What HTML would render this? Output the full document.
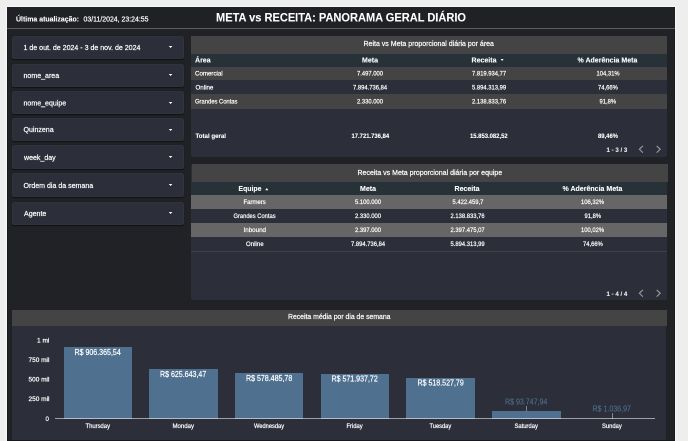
<!DOCTYPE html>
<html lang="pt-BR">
<head>
<meta charset="utf-8">
<title>META vs RECEITA: PANORAMA GERAL DIÁRIO</title>
<style>
*{margin:0;padding:0;box-sizing:border-box}
html,body{width:688px;height:441px;overflow:hidden;background:#eeeeee}
body{position:relative;font-family:"Liberation Sans","DejaVu Sans",sans-serif;color:#fff}
.a{position:absolute}
.t{position:absolute;white-space:nowrap;line-height:1;transform-origin:0 0;will-change:transform}
.t span{display:inline-block;transform-origin:0 0}
</style>
</head>
<body>
<div class="a" style="left:7px;top:6.5px;width:668px;height:434px;background:#212226;box-shadow:0 0 0 1.3px #f6f6f6, inset 0 0 0 1px rgba(0,0,0,.28);"></div>
<div class="a" style="left:7px;top:6.5px;width:668px;height:21.5px;background:#202124;"></div>
<div class="a" style="left:7px;top:28px;width:668px;height:1px;background:#5c5c5c;"></div>
<div class="a" style="left:12px;top:35.6px;width:172px;height:23.4px;background:#2c2f39;border-radius:2px;box-shadow:inset 0 0 0 .8px rgba(255,255,255,.035), 0 0.3px 1px rgba(0,0,0,.5);"></div>
<svg class="a" style="left:166px;top:44.4px" width="10" height="6" viewBox="0 0 10 6"><path d="M2.8 1.9 L6.4 1.9 L4.6 3.9 Z" fill="#fff"/></svg>
<div class="a" style="left:12px;top:63.5px;width:172px;height:23.2px;background:#2c2f39;border-radius:2px;box-shadow:inset 0 0 0 .8px rgba(255,255,255,.035), 0 0.3px 1px rgba(0,0,0,.5);"></div>
<svg class="a" style="left:166px;top:72.3px" width="10" height="6" viewBox="0 0 10 6"><path d="M2.8 1.9 L6.4 1.9 L4.6 3.9 Z" fill="#fff"/></svg>
<div class="a" style="left:12px;top:91.3px;width:172px;height:23px;background:#2c2f39;border-radius:2px;box-shadow:inset 0 0 0 .8px rgba(255,255,255,.035), 0 0.3px 1px rgba(0,0,0,.5);"></div>
<svg class="a" style="left:166px;top:99.9px" width="10" height="6" viewBox="0 0 10 6"><path d="M2.8 1.9 L6.4 1.9 L4.6 3.9 Z" fill="#fff"/></svg>
<div class="a" style="left:12px;top:117.9px;width:172px;height:23.1px;background:#2c2f39;border-radius:2px;box-shadow:inset 0 0 0 .8px rgba(255,255,255,.035), 0 0.3px 1px rgba(0,0,0,.5);"></div>
<svg class="a" style="left:166px;top:126.6px" width="10" height="6" viewBox="0 0 10 6"><path d="M2.8 1.9 L6.4 1.9 L4.6 3.9 Z" fill="#fff"/></svg>
<div class="a" style="left:12px;top:145.4px;width:172px;height:23.2px;background:#2c2f39;border-radius:2px;box-shadow:inset 0 0 0 .8px rgba(255,255,255,.035), 0 0.3px 1px rgba(0,0,0,.5);"></div>
<svg class="a" style="left:166px;top:154.3px" width="10" height="6" viewBox="0 0 10 6"><path d="M2.8 1.9 L6.4 1.9 L4.6 3.9 Z" fill="#fff"/></svg>
<div class="a" style="left:12px;top:173px;width:172px;height:23.9px;background:#2c2f39;border-radius:2px;box-shadow:inset 0 0 0 .8px rgba(255,255,255,.035), 0 0.3px 1px rgba(0,0,0,.5);"></div>
<svg class="a" style="left:166px;top:182px" width="10" height="6" viewBox="0 0 10 6"><path d="M2.8 1.9 L6.4 1.9 L4.6 3.9 Z" fill="#fff"/></svg>
<div class="a" style="left:12px;top:201.5px;width:172px;height:23.3px;background:#2c2f39;border-radius:2px;box-shadow:inset 0 0 0 .8px rgba(255,255,255,.035), 0 0.3px 1px rgba(0,0,0,.5);"></div>
<svg class="a" style="left:166px;top:210.3px" width="10" height="6" viewBox="0 0 10 6"><path d="M2.8 1.9 L6.4 1.9 L4.6 3.9 Z" fill="#fff"/></svg>
<div class="a" style="left:191px;top:35.6px;width:476px;height:121.3px;background:#2c2f39;border-radius:0 0 2px 2px;"></div>
<div class="a" style="left:191px;top:35.6px;width:476px;height:18px;background:#444444;"></div>
<div class="a" style="left:191px;top:53.6px;width:476px;height:12.9px;background:#263238;"></div>
<div class="a" style="left:191px;top:66.5px;width:476px;height:13.8px;background:#444444;"></div>
<div class="a" style="left:191px;top:94.2px;width:476px;height:14.4px;background:#444444;"></div>
<svg class="a" style="left:498px;top:56px" width="8" height="8" viewBox="0 0 8 8"><path d="M2.6 2.9 L5.6 2.9 L4.1 4.9 Z" fill="#fff"/></svg>
<svg class="a" style="left:636px;top:144.4px" width="28" height="10" viewBox="0 0 28 10"><path d="M6.9 1.9 L3.4 5.3 L6.9 8.7" fill="none" stroke="#9c9c9c" stroke-width="1.15"/><path d="M20.7 1.9 L24.2 5.3 L20.7 8.7" fill="none" stroke="#9c9c9c" stroke-width="1.15"/></svg>
<div class="a" style="left:191px;top:164.6px;width:475.5px;height:135.6px;background:#2c2f39;border-radius:0 0 2px 2px;"></div>
<div class="a" style="left:192.25px;top:164.4px;width:476px;height:17.3px;background:#444444;"></div>
<div class="a" style="left:191px;top:181.6px;width:475.5px;height:13.5px;background:#263238;"></div>
<div class="a" style="left:191px;top:195.1px;width:475.5px;height:13.8px;background:#666666;"></div>
<div class="a" style="left:191px;top:223px;width:475.5px;height:14px;background:#666666;"></div>
<div class="a" style="left:191px;top:251px;width:475.5px;height:0.6px;background:#3d4048;"></div>
<svg class="a" style="left:262.7px;top:184.5px" width="8" height="8" viewBox="0 0 8 8"><path d="M2.2 5.2 L5.4 5.2 L3.8 3 Z" fill="#fff"/></svg>
<svg class="a" style="left:636px;top:288.4px" width="28" height="10" viewBox="0 0 28 10"><path d="M6.9 1.9 L3.4 5.3 L6.9 8.7" fill="none" stroke="#9c9c9c" stroke-width="1.15"/><path d="M20.7 1.9 L24.2 5.3 L20.7 8.7" fill="none" stroke="#9c9c9c" stroke-width="1.15"/></svg>
<div class="a" style="left:12.4px;top:310px;width:654.1px;height:130px;background:#2c2f39;"></div>
<div class="a" style="left:12px;top:309.7px;width:655px;height:16.7px;background:#444444;"></div>
<div class="a" style="left:63.5px;top:347.45px;width:68.6px;height:71.1497px;background:#50708f;"></div>
<div class="a" style="left:149.2px;top:369.487px;width:68.6px;height:49.113px;background:#50708f;"></div>
<div class="a" style="left:234.9px;top:373.189px;width:68.6px;height:45.4111px;background:#50708f;"></div>
<div class="a" style="left:320.6px;top:373.703px;width:68.6px;height:44.8971px;background:#50708f;"></div>
<div class="a" style="left:406.3px;top:377.896px;width:68.6px;height:40.7044px;background:#50708f;"></div>
<div class="a" style="left:492px;top:411.241px;width:68.6px;height:7.35921px;background:#50708f;"></div>
<div class="a" style="left:525.95px;top:406.2px;width:0.7px;height:5.04079px;background:#80868f;"></div>
<div class="a" style="left:611.65px;top:413.2px;width:0.7px;height:5.3186px;background:#80868f;"></div>
<div class="a" style="left:54.7px;top:418.15px;width:600.6px;height:1px;background:rgba(255,255,255,.55);"></div>
<div class="t" style="left:16px;top:15px;font-size:14.4px;transform:translate(0px,0.5px) scale(.5);font-weight:bold;-webkit-text-stroke:0.2px;"><span style="transform:scaleX(0.967)">Última atualização:</span></div>
<div class="t" style="left:83px;top:15px;font-size:14.4px;transform:translate(0.5px,0.5px) scale(.5);-webkit-text-stroke:0.42px;"><span style="transform:scaleX(0.963)">03/11/2024, 23:24:55</span></div>
<div class="t" style="left:216px;top:11px;font-size:24.8px;transform:translate(0px,0.5px) scale(.5);font-weight:bold;-webkit-text-stroke:0.2px;"><span style="transform:scaleX(0.891)">META vs RECEITA: PANORAMA GERAL DIÁRIO</span></div>
<div class="t" style="left:23px;top:44px;font-size:14.6px;transform:translate(0.5px,0px) scale(.5);-webkit-text-stroke:0.42px;"><span style="transform:scaleX(0.965)">1 de out. de 2024 - 3 de nov. de 2024</span></div>
<div class="t" style="left:23px;top:72px;font-size:14.6px;transform:translate(0.5px,0px) scale(.5);-webkit-text-stroke:0.42px;"><span style="transform:scaleX(0.965)">nome_area</span></div>
<div class="t" style="left:23px;top:99px;font-size:14.6px;transform:translate(0.5px,0.5px) scale(.5);-webkit-text-stroke:0.42px;"><span style="transform:scaleX(0.965)">nome_equipe</span></div>
<div class="t" style="left:23px;top:126px;font-size:14.6px;transform:translate(0.5px,0px) scale(.5);-webkit-text-stroke:0.42px;"><span style="transform:scaleX(0.965)">Quinzena</span></div>
<div class="t" style="left:24px;top:154px;font-size:14.6px;transform:translate(0px,0px) scale(.5);-webkit-text-stroke:0.42px;"><span style="transform:scaleX(0.965)">week_day</span></div>
<div class="t" style="left:23px;top:182px;font-size:14.6px;transform:translate(0.5px,0px) scale(.5);-webkit-text-stroke:0.42px;"><span style="transform:scaleX(0.965)">Ordem dia da semana</span></div>
<div class="t" style="left:24px;top:210px;font-size:14.6px;transform:translate(0px,0px) scale(.5);-webkit-text-stroke:0.42px;"><span style="transform:scaleX(0.965)">Agente</span></div>
<div class="t" style="left:363px;top:40px;font-size:14.6px;transform:translate(0.5px,0px) scale(.5);-webkit-text-stroke:0.42px;"><span style="transform:scaleX(0.960)">Reita vs Meta proporcional diária por área</span></div>
<div class="t" style="left:195px;top:56px;font-size:14.8px;transform:translate(0px,0.5px) scale(.5);font-weight:bold;-webkit-text-stroke:0.2px;"><span style="transform:scaleX(0.950)">Área</span></div>
<div class="t" style="left:362px;top:56px;font-size:14.8px;transform:translate(0px,0.5px) scale(.5);font-weight:bold;-webkit-text-stroke:0.2px;"><span style="transform:scaleX(0.950)">Meta</span></div>
<div class="t" style="left:471px;top:56px;font-size:14.8px;transform:translate(0.5px,0.5px) scale(.5);font-weight:bold;-webkit-text-stroke:0.2px;"><span style="transform:scaleX(0.950)">Receita</span></div>
<div class="t" style="left:577px;top:56px;font-size:14.8px;transform:translate(0.5px,0.5px) scale(.5);font-weight:bold;-webkit-text-stroke:0.2px;"><span style="transform:scaleX(0.950)">% Aderência Meta</span></div>
<div class="t" style="left:195px;top:70px;font-size:13px;transform:translate(0px,0px) scale(.5);-webkit-text-stroke:0.42px;"><span style="transform:scaleX(0.946)">Comercial</span></div>
<div class="t" style="left:357px;top:70px;font-size:13px;transform:translate(0px,0px) scale(.5);-webkit-text-stroke:0.42px;"><span style="transform:scaleX(0.900)">7.497.000</span></div>
<div class="t" style="left:472px;top:70px;font-size:13px;transform:translate(0px,0px) scale(.5);-webkit-text-stroke:0.42px;"><span style="transform:scaleX(0.900)">7.819.934,77</span></div>
<div class="t" style="left:596px;top:70px;font-size:13px;transform:translate(0.5px,0px) scale(.5);-webkit-text-stroke:0.42px;"><span style="transform:scaleX(0.900)">104,31%</span></div>
<div class="t" style="left:195px;top:84px;font-size:13px;transform:translate(0.5px,0px) scale(.5);-webkit-text-stroke:0.42px;"><span style="transform:scaleX(0.951)">Online</span></div>
<div class="t" style="left:353px;top:84px;font-size:13px;transform:translate(0px,0px) scale(.5);-webkit-text-stroke:0.42px;"><span style="transform:scaleX(0.900)">7.894.736,84</span></div>
<div class="t" style="left:472px;top:84px;font-size:13px;transform:translate(0px,0px) scale(.5);-webkit-text-stroke:0.42px;"><span style="transform:scaleX(0.900)">5.894.313,99</span></div>
<div class="t" style="left:598px;top:84px;font-size:13px;transform:translate(0px,0px) scale(.5);-webkit-text-stroke:0.42px;"><span style="transform:scaleX(0.900)">74,66%</span></div>
<div class="t" style="left:195px;top:98px;font-size:13px;transform:translate(0px,0px) scale(.5);-webkit-text-stroke:0.42px;"><span style="transform:scaleX(0.897)">Grandes Contas</span></div>
<div class="t" style="left:357px;top:98px;font-size:13px;transform:translate(0px,0px) scale(.5);-webkit-text-stroke:0.42px;"><span style="transform:scaleX(0.900)">2.330.000</span></div>
<div class="t" style="left:472px;top:98px;font-size:13px;transform:translate(0px,0px) scale(.5);-webkit-text-stroke:0.42px;"><span style="transform:scaleX(0.900)">2.138.833,76</span></div>
<div class="t" style="left:599px;top:98px;font-size:13px;transform:translate(0.5px,0px) scale(.5);-webkit-text-stroke:0.42px;"><span style="transform:scaleX(0.900)">91,8%</span></div>
<div class="t" style="left:195px;top:132px;font-size:13px;transform:translate(0.5px,0.5px) scale(.5);font-weight:bold;-webkit-text-stroke:0.2px;"><span style="transform:scaleX(0.941)">Total geral</span></div>
<div class="t" style="left:351px;top:132px;font-size:13px;transform:translate(0.5px,0.5px) scale(.5);font-weight:bold;-webkit-text-stroke:0.2px;"><span style="transform:scaleX(0.905)">17.721.736,84</span></div>
<div class="t" style="left:470px;top:132px;font-size:13px;transform:translate(0px,0.5px) scale(.5);font-weight:bold;-webkit-text-stroke:0.2px;"><span style="transform:scaleX(0.905)">15.853.082,52</span></div>
<div class="t" style="left:598px;top:132px;font-size:13px;transform:translate(0px,0.5px) scale(.5);font-weight:bold;-webkit-text-stroke:0.2px;"><span style="transform:scaleX(0.905)">89,46%</span></div>
<div class="t" style="left:606px;top:146px;font-size:13px;transform:translate(0.5px,0.5px) scale(.5);font-weight:bold;color:#ececec;-webkit-text-stroke:0.2px;"><span style="transform:scaleX(0.943)">1 - 3 / 3</span></div>
<div class="t" style="left:357px;top:169px;font-size:14.6px;transform:translate(0.5px,0px) scale(.5);-webkit-text-stroke:0.42px;"><span style="transform:scaleX(0.959)">Receita vs Meta proporcional diária por equipe</span></div>
<div class="t" style="left:238px;top:185px;font-size:14.8px;transform:translate(0.5px,0px) scale(.5);font-weight:bold;-webkit-text-stroke:0.2px;"><span style="transform:scaleX(0.928)">Equipe</span></div>
<div class="t" style="left:360px;top:185px;font-size:14.8px;transform:translate(0px,0px) scale(.5);font-weight:bold;-webkit-text-stroke:0.2px;"><span style="transform:scaleX(0.950)">Meta</span></div>
<div class="t" style="left:454px;top:185px;font-size:14.8px;transform:translate(0.5px,0px) scale(.5);font-weight:bold;-webkit-text-stroke:0.2px;"><span style="transform:scaleX(0.950)">Receita</span></div>
<div class="t" style="left:562px;top:185px;font-size:14.8px;transform:translate(0.5px,0px) scale(.5);font-weight:bold;-webkit-text-stroke:0.2px;"><span style="transform:scaleX(0.950)">% Aderência Meta</span></div>
<div class="t" style="left:243px;top:198px;font-size:13px;transform:translate(0.5px,0.5px) scale(.5);-webkit-text-stroke:0.42px;"><span style="transform:scaleX(0.920)">Farmers</span></div>
<div class="t" style="left:355px;top:198px;font-size:13px;transform:translate(0px,0.5px) scale(.5);-webkit-text-stroke:0.42px;"><span style="transform:scaleX(0.900)">5.100.000</span></div>
<div class="t" style="left:452px;top:198px;font-size:13px;transform:translate(0.5px,0.5px) scale(.5);-webkit-text-stroke:0.42px;"><span style="transform:scaleX(0.900)">5.422.459,7</span></div>
<div class="t" style="left:581px;top:198px;font-size:13px;transform:translate(0px,0.5px) scale(.5);-webkit-text-stroke:0.42px;"><span style="transform:scaleX(0.900)">106,32%</span></div>
<div class="t" style="left:233px;top:212px;font-size:13px;transform:translate(0.5px,0.5px) scale(.5);-webkit-text-stroke:0.42px;"><span style="transform:scaleX(0.889)">Grandes Contas</span></div>
<div class="t" style="left:355px;top:212px;font-size:13px;transform:translate(0px,0.5px) scale(.5);-webkit-text-stroke:0.42px;"><span style="transform:scaleX(0.900)">2.330.000</span></div>
<div class="t" style="left:450px;top:212px;font-size:13px;transform:translate(0.5px,0.5px) scale(.5);-webkit-text-stroke:0.42px;"><span style="transform:scaleX(0.900)">2.138.833,76</span></div>
<div class="t" style="left:584px;top:212px;font-size:13px;transform:translate(0.5px,0.5px) scale(.5);-webkit-text-stroke:0.42px;"><span style="transform:scaleX(0.900)">91,8%</span></div>
<div class="t" style="left:243px;top:226px;font-size:13px;transform:translate(0.5px,0.5px) scale(.5);-webkit-text-stroke:0.42px;"><span style="transform:scaleX(0.958)">Inbound</span></div>
<div class="t" style="left:355px;top:226px;font-size:13px;transform:translate(0px,0.5px) scale(.5);-webkit-text-stroke:0.42px;"><span style="transform:scaleX(0.900)">2.397.000</span></div>
<div class="t" style="left:450px;top:226px;font-size:13px;transform:translate(0.5px,0.5px) scale(.5);-webkit-text-stroke:0.42px;"><span style="transform:scaleX(0.900)">2.397.475,07</span></div>
<div class="t" style="left:581px;top:226px;font-size:13px;transform:translate(0px,0.5px) scale(.5);-webkit-text-stroke:0.42px;"><span style="transform:scaleX(0.900)">100,02%</span></div>
<div class="t" style="left:246px;top:240px;font-size:13px;transform:translate(0px,0.5px) scale(.5);-webkit-text-stroke:0.42px;"><span style="transform:scaleX(0.940)">Online</span></div>
<div class="t" style="left:351px;top:240px;font-size:13px;transform:translate(0px,0.5px) scale(.5);-webkit-text-stroke:0.42px;"><span style="transform:scaleX(0.900)">7.894.736,84</span></div>
<div class="t" style="left:450px;top:240px;font-size:13px;transform:translate(0.5px,0.5px) scale(.5);-webkit-text-stroke:0.42px;"><span style="transform:scaleX(0.900)">5.894.313,99</span></div>
<div class="t" style="left:583px;top:240px;font-size:13px;transform:translate(0px,0.5px) scale(.5);-webkit-text-stroke:0.42px;"><span style="transform:scaleX(0.900)">74,66%</span></div>
<div class="t" style="left:606px;top:290px;font-size:13px;transform:translate(0.5px,0.5px) scale(.5);font-weight:bold;color:#ececec;-webkit-text-stroke:0.2px;"><span style="transform:scaleX(0.941)">1 - 4 / 4</span></div>
<div class="t" style="left:288px;top:313px;font-size:14.6px;transform:translate(0px,0px) scale(.5);-webkit-text-stroke:0.42px;"><span style="transform:scaleX(0.939)">Receita média por dia de semana</span></div>
<div class="t" style="left:37px;top:337px;font-size:13px;transform:translate(0px,0px) scale(.5);-webkit-text-stroke:0.44px;"><span style="transform:scaleX(1.007)">1 mi</span></div>
<div class="t" style="left:28px;top:356px;font-size:13px;transform:translate(0.5px,0.5px) scale(.5);-webkit-text-stroke:0.44px;"><span style="transform:scaleX(0.997)">750 mil</span></div>
<div class="t" style="left:28px;top:376px;font-size:13px;transform:translate(0.5px,0px) scale(.5);-webkit-text-stroke:0.44px;"><span style="transform:scaleX(0.997)">500 mil</span></div>
<div class="t" style="left:28px;top:395px;font-size:13px;transform:translate(0.5px,0.5px) scale(.5);-webkit-text-stroke:0.44px;">250 mil</div>
<div class="t" style="left:45px;top:415px;font-size:13px;transform:translate(0.5px,0.5px) scale(.5);-webkit-text-stroke:0.44px;"><span style="transform:scaleX(0.945)">0</span></div>
<div class="t" style="left:74px;top:348px;font-size:16.4px;transform:translate(0.5px,0px) scale(.5);-webkit-text-stroke:0.42px;"><span style="transform:scaleX(0.860)">R$ 906.365,54</span></div>
<div class="t" style="left:85px;top:422px;font-size:13px;transform:translate(0.5px,0.5px) scale(.5);-webkit-text-stroke:0.44px;"><span style="transform:scaleX(0.905)">Thursday</span></div>
<div class="t" style="left:160px;top:370px;font-size:16.4px;transform:translate(0px,0px) scale(.5);-webkit-text-stroke:0.42px;"><span style="transform:scaleX(0.860)">R$ 625.643,47</span></div>
<div class="t" style="left:172px;top:422px;font-size:13px;transform:translate(0.5px,0.5px) scale(.5);-webkit-text-stroke:0.44px;"><span style="transform:scaleX(0.931)">Monday</span></div>
<div class="t" style="left:246px;top:374px;font-size:16.4px;transform:translate(0px,0px) scale(.5);-webkit-text-stroke:0.42px;"><span style="transform:scaleX(0.860)">R$ 578.485,78</span></div>
<div class="t" style="left:254px;top:422px;font-size:13px;transform:translate(0px,0.5px) scale(.5);-webkit-text-stroke:0.44px;"><span style="transform:scaleX(0.879)">Wednesday</span></div>
<div class="t" style="left:331px;top:374px;font-size:16.4px;transform:translate(0.5px,0.5px) scale(.5);-webkit-text-stroke:0.42px;"><span style="transform:scaleX(0.860)">R$ 571.937,72</span></div>
<div class="t" style="left:346px;top:422px;font-size:13px;transform:translate(0.5px,0.5px) scale(.5);-webkit-text-stroke:0.44px;"><span style="transform:scaleX(0.895)">Friday</span></div>
<div class="t" style="left:417px;top:378px;font-size:16.4px;transform:translate(0.5px,0.5px) scale(.5);-webkit-text-stroke:0.42px;"><span style="transform:scaleX(0.860)">R$ 518.527,79</span></div>
<div class="t" style="left:429px;top:422px;font-size:13px;transform:translate(0.5px,0.5px) scale(.5);-webkit-text-stroke:0.44px;"><span style="transform:scaleX(0.879)">Tuesday</span></div>
<div class="t" style="left:505px;top:397px;font-size:16.4px;transform:translate(0px,0.5px) scale(.5);color:#50708f;-webkit-text-stroke:0.2px;"><span style="transform:scaleX(0.860)">R$ 93.747,94</span></div>
<div class="t" style="left:514px;top:422px;font-size:13px;transform:translate(0.5px,0.5px) scale(.5);-webkit-text-stroke:0.44px;"><span style="transform:scaleX(0.898)">Saturday</span></div>
<div class="t" style="left:592px;top:404px;font-size:16.4px;transform:translate(0.5px,0.5px) scale(.5);color:#50708f;-webkit-text-stroke:0.2px;"><span style="transform:scaleX(0.860)">R$ 1.036,97</span></div>
<div class="t" style="left:602px;top:422px;font-size:13px;transform:translate(0px,0.5px) scale(.5);-webkit-text-stroke:0.44px;"><span style="transform:scaleX(0.896)">Sunday</span></div>
</body>
</html>
